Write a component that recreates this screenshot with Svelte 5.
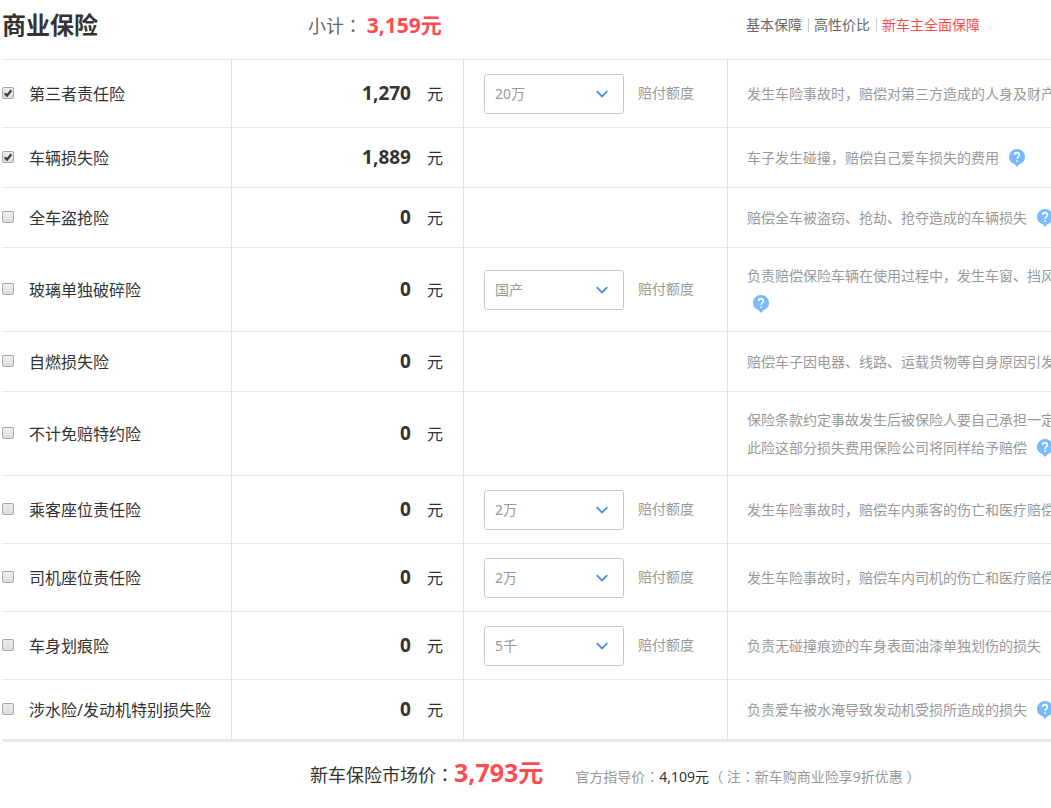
<script>
  let rows = $state([
    { id: 'third', name: '第三者责任险', price: '1,270', checked: true, option: '20万', lines: ['发生车险事故时，赔偿对第三方造成的人身及财产'], help: false },
    { id: 'damage', name: '车辆损失险', price: '1,889', checked: true, option: '', lines: ['车子发生碰撞，赔偿自己爱车损失的费用'], help: true },
    { id: 'theft', name: '全车盗抢险', price: '0', checked: false, option: '', lines: ['赔偿全车被盗窃、抢劫、抢夺造成的车辆损失'], help: true },
    { id: 'glass', name: '玻璃单独破碎险', price: '0', checked: false, option: '国产', lines: ['负责赔偿保险车辆在使用过程中，发生车窗、挡风', ''], help: true },
    { id: 'fire', name: '自燃损失险', price: '0', checked: false, option: '', lines: ['赔偿车子因电器、线路、运载货物等自身原因引发'], help: false },
    { id: 'waiver', name: '不计免赔特约险', price: '0', checked: false, option: '', lines: ['保险条款约定事故发生后被保险人要自己承担一定', '此险这部分损失费用保险公司将同样给予赔偿'], help: true },
    { id: 'passenger', name: '乘客座位责任险', price: '0', checked: false, option: '2万', lines: ['发生车险事故时，赔偿车内乘客的伤亡和医疗赔偿'], help: false },
    { id: 'driver', name: '司机座位责任险', price: '0', checked: false, option: '2万', lines: ['发生车险事故时，赔偿车内司机的伤亡和医疗赔偿'], help: false },
    { id: 'scratch', name: '车身划痕险', price: '0', checked: false, option: '5千', lines: ['负责无碰撞痕迹的车身表面油漆单独划伤的损失'], help: false },
    { id: 'water', name: '涉水险/发动机特别损失险', price: '0', checked: false, option: '', lines: ['负责爱车被水淹导致发动机受损所造成的损失'], help: true }
  ]);
</script>

<main>
  <header>
    <h1>商业保险</h1>
    <p class="subtotal">小计<span class="colon">：</span> <strong>3,159元</strong></p>
    <nav>
      <a href="#basic">基本保障</a><i></i><a href="#value">高性价比</a><i></i><a class="active" href="#full">新车主全面保障</a>
    </nav>
  </header>

  <table>
    <colgroup><col class="c-name" /><col class="c-price" /><col class="c-option" /><col /></colgroup>
    <tbody>
      {#each rows as row (row.id)}
        <tr>
          <td class="name">
            <label>
              <span class="tick">
                <input type="checkbox" bind:checked={row.checked} />
                {#if row.checked}
                  <svg viewBox="0 0 12 12" aria-hidden="true"><path d="M2.8 6.2 5 8.6 9.3 3.2" /></svg>
                {/if}
              </span>
              {row.name}
            </label>
          </td>
          <td class="price"><strong>{row.price}</strong>元</td>
          <td class="option">
            {#if row.option}
              <div class="field">
                <span class="picker">
                  <select id={row.id}><option>{row.option}</option></select>
                  <svg viewBox="0 0 12 8" aria-hidden="true"><path d="M.7 1.2 6 6.5 11.3 1.2" /></svg>
                </span>
                <label for={row.id}>赔付额度</label>
              </div>
            {/if}
          </td>
          <td class="desc">
            {#each row.lines as line, n}
              <div class="line">
                {line}
                {#if row.help && n === row.lines.length - 1}
                  <button class:lead={!line} type="button" aria-label="?">
                    <svg viewBox="0 0 16 18" aria-hidden="true">
                      <path class="pin" d="M8 0a8 8 0 0 1 8 8c0 3.400-2.100 6-5.300 7L8 18l-2.700-3C2.100 14 0 11.400 0 8a8 8 0 0 1 8-8Z" />
                      <path class="hook" d="M5.600 6.100C5.600 4.400 6.600 3.600 8 3.600s2.400.9 2.400 2.300C10.400 7.700 8 7.900 8 10.100" />
                      <path class="dot" d="M7.200 11.300h1.600v1.600H7.200z" />
                    </svg>
                  </button>
                {/if}
              </div>
            {/each}
          </td>
        </tr>
      {/each}
    </tbody>
  </table>

  <footer>
    <p class="total">新车保险市场价<span class="colon">：</span><strong>3,793元</strong></p>
    <p class="guide">官方指导价<span class="colon">：</span><b>4,109元</b>（ 注<span class="colon">：</span>新车购商业险享9折优惠 ）</p>
  </footer>
</main>

<style>
  :global(body) {
    margin: 0;
    background: #fff;
  }
  main {
    padding-left: 2px;
    overflow: hidden;
    color: #333;
    font: 14px/28px "Noto Sans", "Noto Sans CJK SC", sans-serif;
    white-space: nowrap;
  }
  h1, p { margin: 0; }
  .colon { font-family: "Noto Sans CJK TC", sans-serif; }
  header {
    display: grid;
    grid-template-columns: 306px 438px 1fr;
    align-items: center;
    height: 50px;
    padding-bottom: 9px;
  }
  h1 { font-size: 24px; }
  .subtotal { color: #666; font-size: 18px; }
  .subtotal strong { color: #ff4c50; font-size: 21px; }
  nav { display: flex; align-items: center; }
  nav a { color: #666; text-decoration: none; }
  nav .active { color: #ff4c50; }
  nav i {
    width: 1px;
    height: 14px;
    margin: 0 5px 0 6px;
    background: #ccc;
  }
  table {
    width: 100%;
    table-layout: fixed;
    border-spacing: 0;
    border-bottom: 3px solid #e8e8e8;
  }
  .c-name { width: 230px; }
  .c-price { width: 232px; }
  .c-option { width: 264px; }
  td {
    box-sizing: border-box;
    height: 60px;
    padding: 14px 0 13px;
    border-top: 1px solid #e8e8e8;
    border-right: 1px solid #e0e0e0;
    vertical-align: middle;
  }
  .name label {
    display: flex;
    align-items: center;
    gap: 15px;
    font-size: 16px;
  }
  .tick { display: grid; padding-bottom: 2px; }
  .tick input, .tick svg { grid-area: 1 / 1; }
  .tick input {
    box-sizing: border-box;
    width: 12px;
    height: 12px;
    margin: 0;
    appearance: none;
    border: 1px solid #aaa;
    border-radius: 2px;
    background: linear-gradient(#eee, #ddd);
  }
  .tick svg {
    width: 12px;
    height: 12px;
    fill: none;
    stroke: #3c3c3c;
    stroke-width: 2.2;
    pointer-events: none;
  }
  .price {
    padding-right: 20px;
    padding-bottom: 14px;
    font-size: 16px;
    text-align: right;
  }
  .price strong {
    margin-right: 16px;
    font-size: 19px;
  }
  .field {
    display: flex;
    align-items: center;
    gap: 14px;
    padding-left: 20px;
    color: #999;
  }
  .field label { padding-bottom: 2px; }
  .picker { display: grid; align-items: center; }
  .picker select, .picker svg { grid-area: 1 / 1; }
  select {
    box-sizing: border-box;
    width: 140px;
    height: 40px;
    padding: 0 10px;
    appearance: none;
    border: 1px solid #c8c8c8;
    border-radius: 3px;
    background: #fff;
    color: #999;
    font: inherit;
  }
  .picker svg {
    justify-self: end;
    width: 12px;
    height: 8px;
    margin-right: 16px;
    fill: none;
    stroke: #4a8de0;
    stroke-width: 1.8;
    pointer-events: none;
  }
  .desc {
    padding-left: 19px;
    overflow: hidden;
    border-right: 0;
    color: #999;
  }
  .line {
    display: flex;
    align-items: center;
    gap: 10px;
    height: 28px;
  }
  button {
    display: flex;
    flex: none;
    padding: 0;
    border: 0;
    background: none;
  }
  .lead { margin-left: 6px; }
  button svg { width: 16px; height: 18px; }
  .pin { fill: #78b9ff; }
  .hook { fill: none; stroke: #fff; stroke-width: 1.6; }
  .dot { fill: #fff; }
  footer {
    display: flex;
    align-items: baseline;
    gap: 32px;
    padding: 16px 0 20px 308px;
  }
  .total { font-size: 18px; }
  .total strong { color: #ff4c50; font-size: 25px; }
  .guide { color: #999; }
  .guide b { color: #333; font-weight: 400; }
</style>
